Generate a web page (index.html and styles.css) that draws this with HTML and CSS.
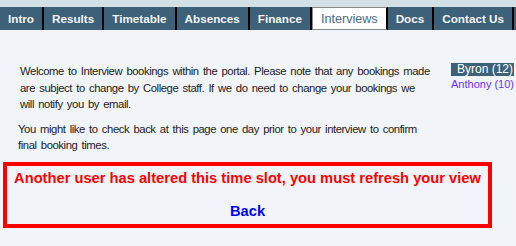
FILE: index.html
```
<!DOCTYPE html>
<html lang="en">
    <head>
        <meta charset="utf-8" />
        <title>Interviews</title>
        <link rel="stylesheet" href="styles.css">
    </head>
    <body>
        <div class="topstrip"></div>
        <nav class="tabs">
            <a class="tab" href="#">Intro</a>
            <a class="tab" href="#">Results</a>
            <a class="tab" href="#">Timetable</a>
            <a class="tab" href="#">Absences</a>
            <a class="tab" href="#">Finance</a>
            <a class="tab current" href="#">Interviews</a>
            <a class="tab" href="#">Docs</a>
            <a class="tab" href="#">Contact Us</a>
            <span class="tab-rest"></span>
        </nav>
        <main class="content">
            <div class="intro">
                <div class="intro-text">
                    <p class="p-first">Welcome to Interview bookings within the portal. Please note that any bookings made are subject to change by College staff. If we do need to change your bookings we will notify you by email.</p>
                    <p class="p-second">You might like to check back at this page one day prior to your interview to confirm final booking times.</p>
                </div>
                <ul class="students">
                    <li class="student selected">Byron (12)</li>
                    <li class="student"><a href="#">Anthony (10)</a></li>
                </ul>
            </div>
            <div class="error-box">
                <p class="error-msg">Another user has altered this time slot, you must refresh your view</p>
                <a class="back" href="#">Back</a>
            </div>
        </main>
    </body>
</html>
```
FILE: styles.css
```
* {
    margin: 0;
    padding: 0;
    list-style: none;
    font-family: "Liberation Sans", Arial, sans-serif;
}

body {
    background: #f1f4f8;
    overflow: hidden;
}

.topstrip {
    height: 7px;
    background: #d3e0e6;
}

.tabs {
    display: flex;
    height: 23px;
    background: #f1f4f8;
    white-space: nowrap;
    overflow: hidden;
}

.tab {
    display: flex;
    align-items: center;
    padding: 0 8px;
    background: #3d6179;
    color: #f4f4f4;
    font-size: 11.7px;
    font-weight: bold;
    text-decoration: none;
    border-right: 2px solid #000;
}

.tab.current {
    background: #fff;
    color: #4a6b82;
    font-size: 12.6px;
    font-weight: normal;
    border: 1px solid #888;
    border-right: 2px solid #000;
}

.tab-rest {
    flex: 1;
    background: #3d6179;
}

.content {
    padding: 33px 2px 0 3px;
}

.intro {
    display: flex;
    justify-content: space-between;
}

.intro-text {
    font-size: 11.3px;
    letter-spacing: -0.43px;
    word-spacing: 1.5px;
    color: #222;
}

.p-first {
    margin-left: 17px;
    width: 412px;
    line-height: 16.5px;
}

.p-second {
    margin: 8px 0 0 15px;
    width: 412px;
    line-height: 16px;
}

.students {
    text-align: right;
    line-height: 13px;
}

.student.selected {
    background: #3d6179;
    color: #fff;
    font-size: 12px;
    padding: 0 1px 0 5px;
}

.student a {
    color: #6633ff;
    font-size: 11px;
    line-height: 15px;
    text-decoration: none;
}

.error-box {
    margin-top: 9px;
    width: 481px;
    border: 4px solid #f00;
    text-align: center;
    padding: 3px 0 4px;
}

.error-msg {
    color: #f00;
    font-size: 14.7px;
    font-weight: bold;
    line-height: 18px;
}

.back {
    display: inline-block;
    margin-top: 15px;
    color: #0000ff;
    font-size: 14.7px;
    font-weight: bold;
    text-decoration: none;
    line-height: 18px;
}
```
